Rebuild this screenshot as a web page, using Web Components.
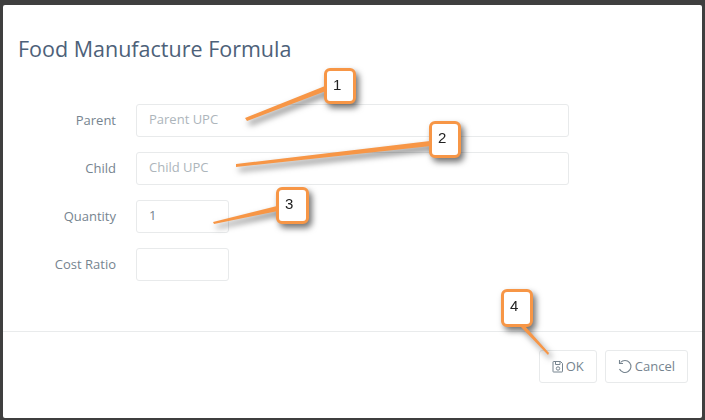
<!DOCTYPE html>
<html>
<head>
<meta charset="utf-8">
<title>Food Manufacture Formula</title>
<style>
html, body { margin: 0; height: 100%; }
body { background: #3f3f3f; font-family: "Open Sans", sans-serif; overflow: hidden; }
</style>
</head>
<body>
<food-modal>
  <span slot="title">Food Manufacture Formula</span>
  <form-row label="Parent" placeholder>Parent UPC</form-row>
  <form-row label="Child" placeholder>Child UPC</form-row>
  <form-row label="Quantity" short>1</form-row>
  <form-row label="Cost Ratio" short></form-row>
  <modal-button slot="footer" icon="save">OK</modal-button>
  <modal-button slot="footer" icon="undo">Cancel</modal-button>
</food-modal>
<call-out n="1" x="324" y="68" w="32" h="36" tail="245,118 325,86 326,91 247,121"></call-out>
<call-out n="2" x="429" y="121" w="32" h="37" tail="236,164 430,141 431,146 236,167"></call-out>
<call-out n="3" x="276" y="187" w="33" h="37" tail="213,222 277,206 278,211 214,224"></call-out>
<call-out n="4" x="501" y="289" w="32" h="38" tail="548,355 520,326 524,325 549,353"></call-out>
<script>
const modalTemplate = document.createElement("template");
modalTemplate.innerHTML = `
<style>
:host {
  display: flex;
  flex-direction: column;
  box-sizing: border-box;
  width: 699px;
  height: 413px;
  margin: 5px 0 0 3px;
  background: #fff;
  border-radius: 2px;
}
#title {
  padding: 29px 15px 0 15px;
  font-size: 21.5px;
  line-height: 29px;
  font-weight: 400;
  color: #4d6179;
}
#body {
  flex-grow: 1;
  display: flex;
  flex-direction: column;
  gap: 15px;
  padding-top: 41px;
}
#footer {
  height: 87px;
  box-sizing: border-box;
  border-top: 1px solid #e9ebec;
  display: flex;
  justify-content: flex-end;
  gap: 8px;
  padding: 18px 14px 0 0;
}
</style>
<div id="title"><slot name="title"></slot></div>
<div id="body"><slot></slot></div>
<div id="footer"><slot name="footer"></slot></div>
`;
class FoodModal extends HTMLElement {
  constructor() {
    super();
    this.attachShadow({ mode: "open" }).appendChild(modalTemplate.content.cloneNode(true));
  }
}
customElements.define("food-modal", FoodModal);

const rowTemplate = document.createElement("template");
rowTemplate.innerHTML = `
<style>
:host {
  display: flex;
  align-items: center;
  height: 33px;
  font-size: 13px;
}
#label {
  width: 113px;
  text-align: right;
  color: #76848f;
  padding-bottom: 2px;
}
#box {
  margin-left: 20px;
  width: 433px;
  height: 33px;
  box-sizing: border-box;
  border: 1px solid #e8eaeb;
  border-radius: 3px;
  padding: 0 12px;
  line-height: 29px;
  color: #76848f;
}
:host([short]) #box { width: 93px; }
:host([placeholder]) #box { color: #adb5bb; }
</style>
<div id="label"></div>
<div id="box"><slot></slot></div>
`;
class FormRow extends HTMLElement {
  constructor() {
    super();
    this.attachShadow({ mode: "open" }).appendChild(rowTemplate.content.cloneNode(true));
    this.shadowRoot.getElementById("label").textContent = this.getAttribute("label");
  }
}
customElements.define("form-row", FormRow);

const icons = {
  save: `<svg width="12" height="13" viewBox="0 0 12 13" fill="none" stroke="#76848f" stroke-width="1">
    <path d="M1.5 1.5h7l2 2v8a.5.5 0 0 1-.5.5h-8.500a.5.5 0 0 1-.5-.5v-9.500a.5.5 0 0 1 .5-.5z"/>
    <path d="M3.500 1.500v3h4.500v-3"/>
    <circle cx="6" cy="8.500" r="1.700"/>
  </svg>`,
  undo: `<svg width="15" height="15" viewBox="0 0 15 15" fill="none" stroke="#76848f" stroke-width="1.100">
    <path d="M2.500 3.500a6 6 0 1 1-1 6.500"/>
    <path d="M1.500 1v3.500h3.500"/>
  </svg>`
};
const buttonTemplate = document.createElement("template");
buttonTemplate.innerHTML = `
<style>
:host {
  display: flex;
  align-items: center;
  justify-content: center;
  gap: 2px;
  height: 33px;
  box-sizing: border-box;
  padding: 0 12px;
  border: 1px solid #e8eaeb;
  border-radius: 3px;
  font-size: 13px;
  color: #76848f;
}
svg { display: block; }
#icon { display: flex; }
#text { padding-bottom: 1px; }
</style>
<span id="icon"></span><span id="text"><slot></slot></span>
`;
class ModalButton extends HTMLElement {
  constructor() {
    super();
    this.attachShadow({ mode: "open" }).appendChild(buttonTemplate.content.cloneNode(true));
    this.shadowRoot.getElementById("icon").innerHTML = icons[this.getAttribute("icon")];
  }
}
customElements.define("modal-button", ModalButton);

// callouts sit over the form, their place is the content
const calloutTemplate = document.createElement("template");
calloutTemplate.innerHTML = `
<style>
:host {
  position: absolute;
  left: 0;
  top: 0;
  width: 705px;
  height: 420px;
  pointer-events: none;
  filter: drop-shadow(3px 4px 3px rgba(0, 0, 0, .55));
}
svg { position: absolute; left: 0; top: 0; }
#num {
  position: absolute;
  box-sizing: border-box;
  background: #fff;
  border: 3px solid #f79646;
  border-radius: 6px;
  padding: 5px 0 0 6px;
  font: 15px "Liberation Sans", sans-serif;
  color: #222;
}
</style>
<svg width="705" height="420"><polygon fill="#f79646"></polygon></svg>
<div id="num"></div>
`;
class CallOut extends HTMLElement {
  constructor() {
    super();
    const shadow = this.attachShadow({ mode: "open" });
    shadow.appendChild(calloutTemplate.content.cloneNode(true));
    shadow.querySelector("polygon").setAttribute("points", this.getAttribute("tail"));
    const num = shadow.getElementById("num");
    num.textContent = this.getAttribute("n");
    num.style.left = this.getAttribute("x") + "px";
    num.style.top = this.getAttribute("y") + "px";
    num.style.width = this.getAttribute("w") + "px";
    num.style.height = this.getAttribute("h") + "px";
  }
}
customElements.define("call-out", CallOut);
</script>
</body>
</html>
